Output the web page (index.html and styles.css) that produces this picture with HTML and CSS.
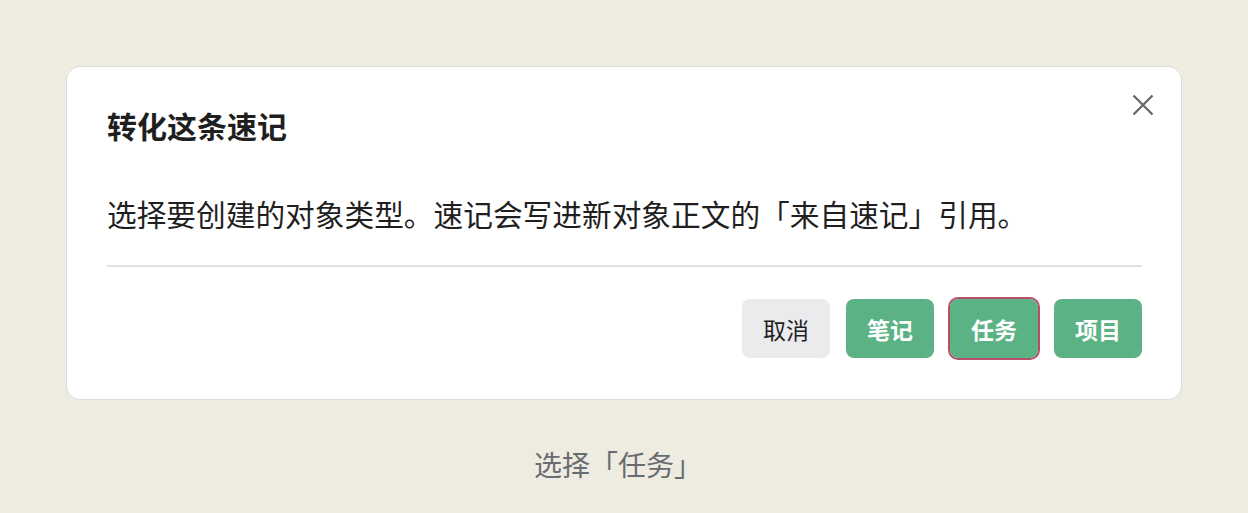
FILE: index.html
```html
<!DOCTYPE html>
<html lang="zh-CN">
<head>
<meta charset="utf-8">
<title>转化这条速记</title>
<link rel="stylesheet" href="styles.css">
</head>
<body>
<div class="page">
  <div class="dialog">
    <button class="close" aria-label="关闭">
      <svg width="22" height="22" viewBox="0 0 22 22"><path d="M1.5 1.5 L20.5 20.5 M20.5 1.5 L1.5 20.5" stroke="#666" stroke-width="2.2" fill="none" stroke-linecap="butt"/></svg>
    </button>
    <h2 class="title">转化这条速记</h2>
    <p class="desc">选择要创建的对象类型。速记会写进新对象正文的「来自速记」引用。</p>
    <div class="divider"></div>
    <div class="actions">
      <button class="btn cancel">取消</button>
      <button class="btn primary">笔记</button>
      <button class="btn primary selected">任务</button>
      <button class="btn primary">项目</button>
    </div>
  </div>
  <div class="caption">选择「任务」</div>
</div>
</body>
</html>
```
FILE: styles.css
```css
html, body {
  margin: 0;
  padding: 0;
  background: #eeebe1;
}
body {
  font-family: "Noto Sans CJK SC", "Noto Sans", sans-serif;
  width: 1248px;
  height: 513px;
  overflow: hidden;
}
.page {
  padding-top: 66px;
  display: flex;
  flex-direction: column;
  align-items: center;
}
.dialog {
  position: relative;
  width: 1116px;
  box-sizing: border-box;
  background: #ffffff;
  border: 1px solid #dcdcdc;
  border-radius: 14px;
  padding: 40px 39px 41px 40px;
}
.close {
  position: absolute;
  top: 27px;
  right: 27px;
  width: 22px;
  height: 22px;
  padding: 0;
  border: 0;
  background: none;
  display: flex;
}
.title {
  margin: 0;
  font-size: 30px;
  line-height: 36px;
  font-weight: 700;
  color: #1f1f1f;
}
.desc {
  margin: 51px 0 0;
  font-size: 29.7px;
  line-height: 40px;
  color: #1f1f1f;
}
.divider {
  margin-top: 31px;
  height: 2px;
  background: #e0e0e0;
}
.actions {
  margin-top: 32px;
  display: flex;
  justify-content: flex-end;
  gap: 16px;
}
.btn {
  width: 88px;
  height: 59px;
  border: 0;
  border-radius: 8px;
  font-family: inherit;
  font-size: 23px;
  padding: 0;
  display: flex;
  align-items: center;
  justify-content: center;
}
.cancel {
  background: #ebebed;
  color: #1f1f1f;
}
.primary {
  background: #5bb385;
  color: #ffffff;
  font-weight: 700;
}
.selected {
  outline: 2px solid #b4506a;
  outline-offset: 0;
}
.caption {
  margin-top: 46px;
  margin-right: 12px;
  font-size: 28px;
  line-height: 36px;
  color: #686b70;
}
```
